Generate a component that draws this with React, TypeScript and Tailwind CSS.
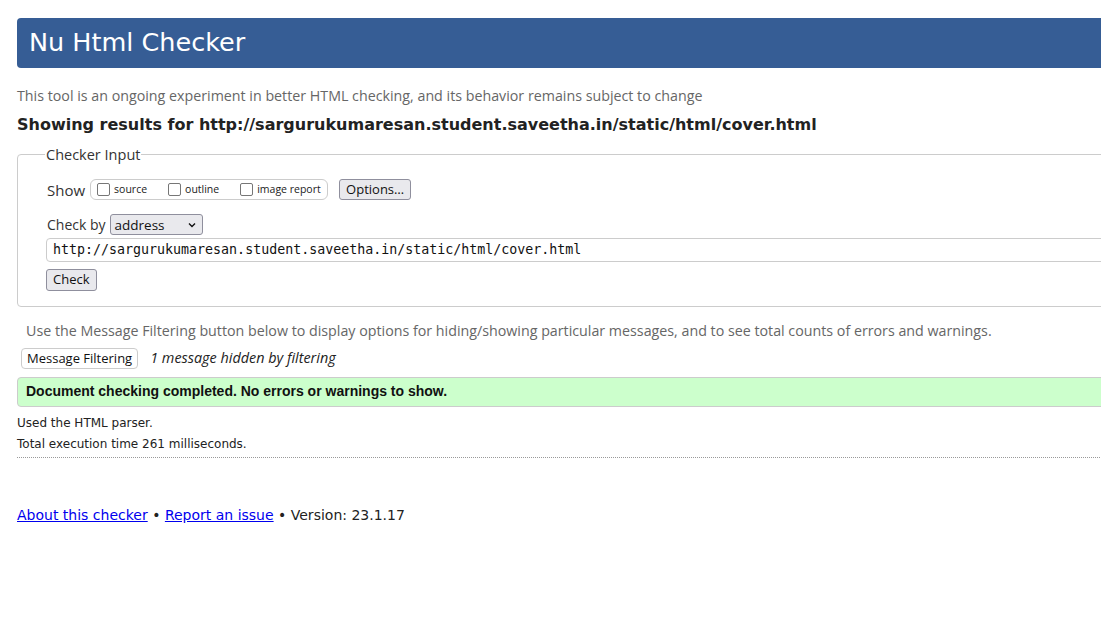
import React from 'react';

const ubuntu = { fontFamily: '"Open Sans", "Noto Sans", sans-serif' };

function Check({ label }: { label: string }) {
  return (
    <label className="flex items-center gap-[4px] text-[10.5px] text-[#222]">
      <span className="inline-block w-[13px] h-[13px] rounded-[2px] border border-[#767676] bg-white" />
      {label}
    </label>
  );
}

export default function App() {
  return (
    <div className="w-[1101px] h-[642px] overflow-hidden bg-white text-[#222]" style={{ fontFamily: '"DejaVu Sans", sans-serif' }}>
      <div className="w-[1300px] pl-[17px] pt-[18px]">
        {/* Title bar */}
        <header className="h-[50px] bg-[#365d95] rounded-l-[4px] flex items-center pl-[12px]">
          <h1 className="text-[25.5px] text-white font-normal leading-none">Nu Html Checker</h1>
        </header>

        <p className="mt-[19px] text-[14.25px] text-[#666] leading-[18px]" style={ubuntu}>
          This tool is an ongoing experiment in better HTML checking, and its behavior remains subject to change
        </p>
        <h2 className="mt-[10px] text-[16px] font-bold leading-[20px] text-[#222]">
          Showing results for http://sargurukumaresan.student.saveetha.in/static/html/cover.html
        </h2>

        {/* Checker input fieldset */}
        <fieldset className="mt-[9px] border border-[#ccc] rounded-l-[4px] pl-[29px] pb-[15px] pt-[13px]" style={ubuntu}>
          <legend className="px-[1px] -ml-[2px] text-[14.5px] text-[#333]">Checker Input</legend>
          <div className="flex items-center h-[22px]">
            <span className="text-[15px] text-[#333] mr-[5px]">Show</span>
            <div className="flex items-center h-[21px] w-[238px] border border-[#ccc] rounded-[6px] pl-[6px] gap-[21px]">
              <Check label="source" />
              <Check label="outline" />
              <Check label="image report" />
            </div>
            <button className="ml-[11px] h-[21px] px-[6px] text-[13px] text-[#111] bg-[#e9e9ed] border border-[#8f8f9d] rounded-[3px]">
              Options…
            </button>
          </div>
          <div className="flex items-center mt-[13px] h-[22px]">
            <span className="text-[14px] text-[#333] mr-[4px]">Check by</span>
            <div className="flex items-center justify-between w-[93px] h-[21px] bg-[#e9e9ed] border border-[#8f8f9d] rounded-[3px] pl-[4px] pr-[5px] text-[13.5px] text-[#111]">
              address
              <svg width="10" height="10" viewBox="0 0 10 10"><path d="M2 3.5 5 6.5 8 3.5" fill="none" stroke="#111" strokeWidth="1.4" /></svg>
            </div>
          </div>
          <div className="mt-[2px] -ml-[1px] h-[24px] border border-[#ccc] rounded-l-[4px] flex items-center pl-[6px] text-[13.3px] text-[#111]" style={{ fontFamily: '"DejaVu Sans Mono", monospace' }}>
            http://sargurukumaresan.student.saveetha.in/static/html/cover.html
          </div>
          <button className="mt-[7px] -ml-[1px] h-[22px] px-[6px] text-[13px] text-[#111] bg-[#e9e9ed] border border-[#8f8f9d] rounded-[3px] block">
            Check
          </button>
        </fieldset>

        <p className="mt-[15px] ml-[9px] text-[14.25px] text-[#666] leading-[18px]" style={ubuntu}>
          Use the Message Filtering button below to display options for hiding/showing particular messages, and to see total counts of errors and warnings.
        </p>
        <div className="flex items-center mt-[8px] ml-[4px] h-[21px]" style={ubuntu}>
          <button className="h-[21px] px-[5px] text-[13px] text-[#111] bg-white border border-[#ccc] rounded-[4px]">
            Message Filtering
          </button>
          <span className="ml-[12px] text-[14.4px] italic text-[#222]">1 message hidden by filtering</span>
        </div>

        <div className="mt-[8px] h-[30px] bg-[#ccffcc] border border-[#ccc] rounded-l-[4px] flex items-center pl-[8px]">
          <p className="text-[14px] font-bold text-[#111]" style={{ fontFamily: '"Liberation Sans", Arial, sans-serif' }}>
            Document checking completed. No errors or warnings to show.
          </p>
        </div>

        <p className="mt-[7px] text-[12px] text-[#222] leading-[18px]">Used the HTML parser.</p>
        <p className="mt-[3px] text-[12px] text-[#222] leading-[18px]">Total execution time 261 milliseconds.</p>
        <div className="mt-[4px] border-b border-dotted border-[#999]" />

        <p className="mt-[48px] text-[14px] text-[#222] leading-[18px]">
          <a href="#" className="text-[#0000ee] underline">About this checker</a>
          {' • '}
          <a href="#" className="text-[#0000ee] underline">Report an issue</a>
          {' • Version: 23.1.17'}
        </p>
      </div>
    </div>
  );
}
